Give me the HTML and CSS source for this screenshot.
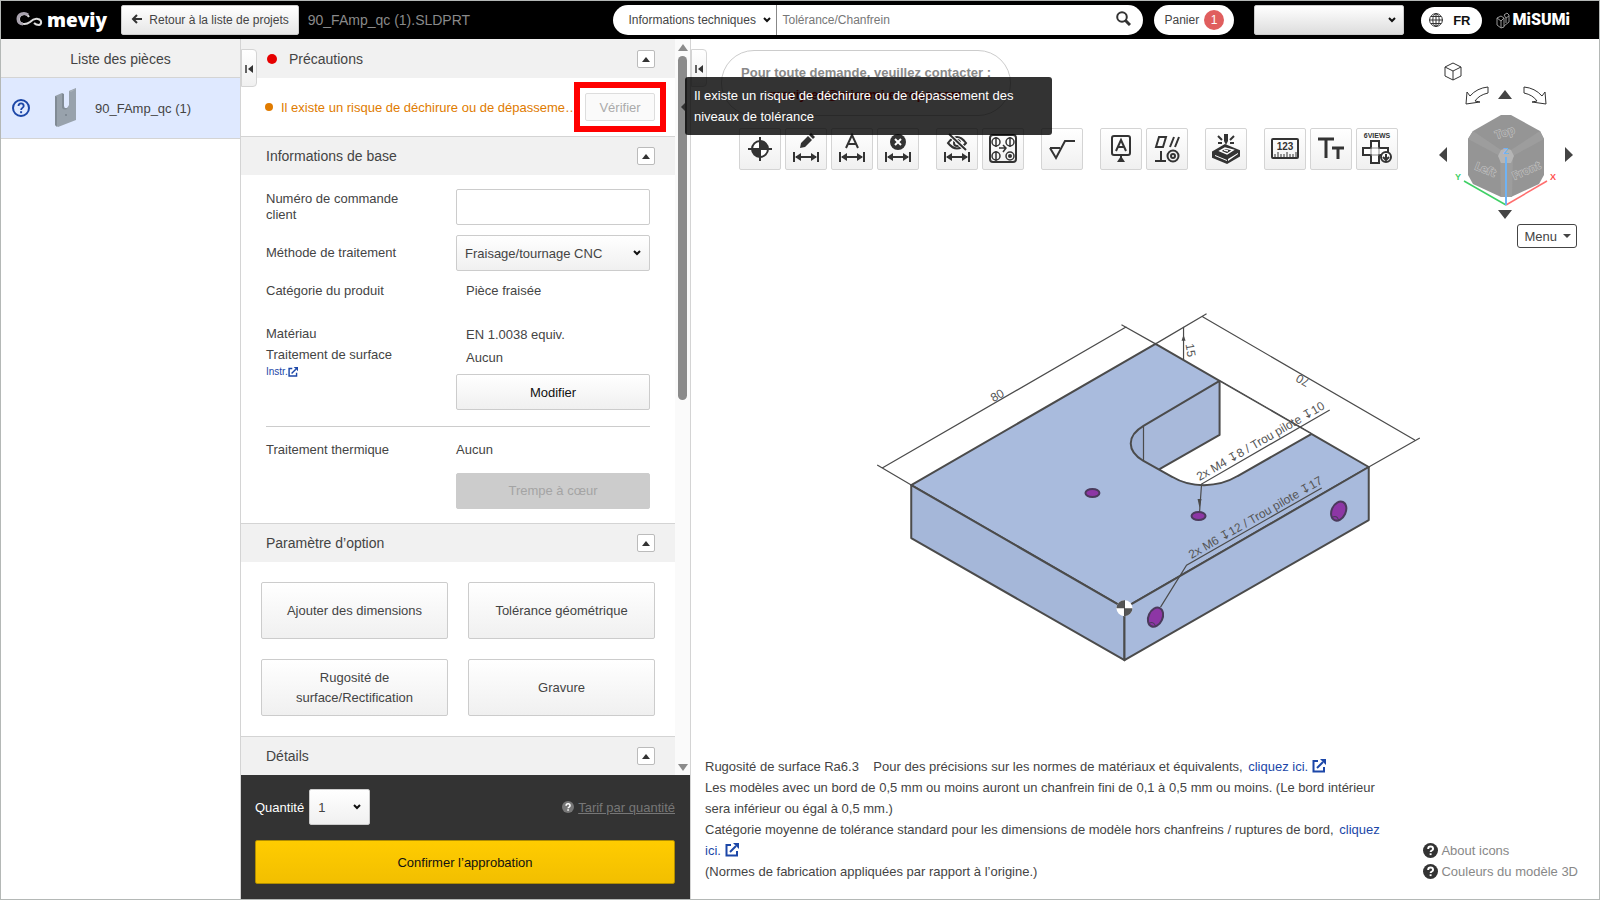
FILE: index.html
```
<!DOCTYPE html>
<html lang="fr">
<head>
    <meta charset="UTF-8">
    <meta name="viewport" content="width=device-width, initial-scale=1.0">
    <title>meviy - 90_FAmp_qc (1).SLDPRT</title>
    <link rel="stylesheet" href="styles.css">
</head>
<body>
    <!-- Shared symbols -->
    <svg class="defs" width="0" height="0" aria-hidden="true">
        <symbol id="dim" viewBox="0 0 26 10">
            <path d="M1 0v10M25 0v10M3 5h20" fill="none" stroke="#333" stroke-width="2"/>
            <path d="M2 5l6-4v8zM24 5l-6-4v8z" fill="#333"/>
        </symbol>
        <symbol id="external" viewBox="0 0 14 14">
            <path d="M6 2H1.5v10.500H12V8" fill="none" stroke="currentColor" stroke-width="2"/>
            <path d="M5 9l6-6" stroke="currentColor" stroke-width="2"/>
            <path d="M8 0h6v6z" fill="currentColor"/>
        </symbol>
        <symbol id="help" viewBox="0 0 14 14">
            <circle cx="7" cy="7" r="7" fill="currentColor"/>
            <path d="M4.800 5.500c0-3 4.600-3 4.600 0 0 1.600-2.300 1.500-2.300 3" fill="none" class="help-mark" stroke-width="1.800"/>
            <path d="M6.200 9.600h1.800v1.700H6.200z" class="help-dot"/>
        </symbol>
    </svg>

    <div class="app">
        <!-- Header -->
        <header class="header">
            <a href="#" class="logo">
                <svg width="28" height="16" viewBox="0 0 28 16" aria-hidden="true">
                    <path d="M13 5C10 0 3 2 3 7c0 6 7 6 11 3 3-3 5-4 8-3 4 1 4 5 1 6-3 0-4-1-5-2" fill="none" stroke="#ddd" stroke-width="2"/>
                    <path d="M12 3C8 0 2 2 2 7c0 3 2 5 5 5" fill="none" stroke="#a8a2ae" stroke-width="3"/>
                </svg>
                <span>meviy</span>
            </a>
            <button class="back-btn">
                <svg width="11" height="10" viewBox="0 0 11 10"><path d="M6 1L2 5l4 4M2 5h9" fill="none" stroke="#333" stroke-width="2"/></svg>
                Retour à la liste de projets
            </button>
            <span class="file-name">90_FAmp_qc (1).SLDPRT</span>

            <form class="search">
                <select class="search-type" aria-label="Type de recherche">
                    <option>Informations techniques</option>
                </select>
                <input type="text" class="search-input" placeholder="Tolérance/Chanfrein" aria-label="Recherche">
                <button type="button" class="search-btn" aria-label="Rechercher">
                    <svg width="15" height="15" viewBox="0 0 15 15"><circle cx="6" cy="6" r="4.800" fill="none" stroke="#333" stroke-width="2"/><path d="M9 9l5 5" stroke="#333" stroke-width="3"/></svg>
                </button>
            </form>
            <button class="cart">Panier <span class="badge">1</span></button>
            <select class="account" aria-label="Compte"><option></option></select>
            <button class="lang">
                <svg width="14" height="14" viewBox="0 0 14 14"><g fill="none" stroke="#333"><circle cx="7" cy="7" r="6.400"/><ellipse cx="7" cy="7" rx="3.200" ry="6.400"/><path d="M7 0v14M0 7h14M2 3.500h10M2 10.500h10"/></g></svg>
                FR
            </button>
            <a href="#" class="misumi">
                <svg width="14" height="17" viewBox="0 0 14 17" aria-hidden="true"><path d="M1 6l4-2 3 2v9l-3 1-4-3zM1 6l4 3v7M5 9l3-3M8 3l3-2 2 2v7l-5 4M8 3l2 3 3-2M10 6v5" fill="none" stroke="#999"/></svg>
                <span>MiSUMi</span>
            </a>
        </header>

        <main class="main">
            <!-- Part list -->
            <aside class="parts">
                <h2 class="parts-title">Liste des pièces</h2>
                <a href="#" class="part">
                    <svg width="18" height="18" viewBox="0 0 18 18"><circle cx="9" cy="9" r="8" fill="none" stroke="#1c47a8" stroke-width="2"/><path d="M6.500 7c0-3.600 5.200-3.600 5.200 0 0 2-2.600 1.800-2.600 4" fill="none" stroke="#1c47a8" stroke-width="1.800"/><path d="M8.100 12.200h2v2h-2z" fill="#1c47a8"/></svg>
                    <svg class="thumb" width="24" height="40" viewBox="0 0 24 40"><path d="M1 8l7-3v14q4 4 7-2V3l7-3v32L4 39l-3-2z" fill="#98a2ac"/><path d="M1 8l2 1v30l-2-2zM8 5v15q3 3 6 0-4 1-4-2V6z" fill="#818b95"/><path d="M15 3l2 1 5-3" fill="#aab2ba"/><circle cx="12" cy="27" r="1" fill="#77818b"/></svg>
                    <span>90_FAmp_qc (1)</span>
                </a>
            </aside>

            <!-- Settings -->
            <section class="settings">
                <button class="collapse" aria-label="Réduire"><svg width="8" height="8" viewBox="0 0 8 8"><path d="M1 0v8" stroke="#333" stroke-width="1.500"/><path d="M8 0v8L3 4z" fill="#333"/></svg></button>
                <div class="scroll">
                    <div class="scroll-content">
                        <div class="section-head">
                            <h3><span class="dot red"></span>Précautions</h3>
                            <button class="toggle" aria-label="Replier Précautions"></button>
                        </div>
                        <div class="warning">
                            <span class="dot orange"></span>
                            <p>Il existe un risque de déchirure ou de dépasseme…</p>
                            <div class="highlight"><button class="verify" disabled>Vérifier</button></div>
                        </div>

                        <div class="section-head">
                            <h3>Informations de base</h3>
                            <button class="toggle" aria-label="Replier Informations de base"></button>
                        </div>
                        <div class="info">
                            <div class="field">
                                <label for="order">Numéro de commande client</label>
                                <input type="text" id="order" class="control">
                            </div>
                            <div class="field">
                                <label for="method">Méthode de traitement</label>
                                <select id="method" class="control"><option>Fraisage/tournage CNC</option></select>
                            </div>
                            <div class="field category">
                                <span>Catégorie du produit</span>
                                <span class="value">Pièce fraisée</span>
                            </div>
                            <div class="field material">
                                <div>
                                    <p>Matériau</p>
                                    <p>Traitement de surface</p>
                                    <a href="#" class="instr">Instr.<svg width="10" height="10"><use href="#external"/></svg></a>
                                </div>
                                <div>
                                    <p class="value">EN 1.0038 equiv.</p>
                                    <p class="value">Aucun</p>
                                    <button class="control">Modifier</button>
                                </div>
                            </div>
                            <div class="field heat">
                                <p>Traitement thermique</p>
                                <div>
                                    <p>Aucun</p>
                                    <button class="control" disabled>Trempe à cœur</button>
                                </div>
                            </div>
                        </div>

                        <div class="section-head">
                            <h3>Paramètre d’option</h3>
                            <button class="toggle" aria-label="Replier Paramètre d’option"></button>
                        </div>
                        <div class="options">
                            <button class="option">Ajouter des dimensions</button>
                            <button class="option">Tolérance géométrique</button>
                            <button class="option">Rugosité de surface/Rectification</button>
                            <button class="option">Gravure</button>
                        </div>

                        <div class="section-head">
                            <h3>Détails</h3>
                            <button class="toggle" aria-label="Replier Détails"></button>
                        </div>
                    </div>
                    <div class="scrollbar">
                        <span class="arrow-up"></span>
                        <span class="thumb-track"><span class="thumb-bar"></span></span>
                        <span class="arrow-down"></span>
                    </div>
                </div>

                <div class="order">
                    <div class="order-row">
                        <label for="qty">Quantité</label>
                        <select id="qty" class="control qty"><option>1</option></select>
                        <a href="#" class="price-link"><svg width="12" height="12"><use href="#help"/></svg><span>Tarif par quantité</span></a>
                    </div>
                    <button class="confirm">Confirmer l’approbation</button>
                </div>
            </section>

            <!-- 3D viewer -->
            <section class="viewer">
                <button class="collapse" aria-label="Réduire"><svg width="8" height="8" viewBox="0 0 8 8"><path d="M1 0v8" stroke="#333" stroke-width="1.500"/><path d="M8 0v8L3 4z" fill="#333"/></svg></button>
                <div class="contact">
                    <p>Pour toute demande, veuillez contacter :</p>
                    <a href="#">meviy-eu@misumi-europe.com</a>
                </div>

                <div class="toolbar">
                    <div class="group">
                        <button class="tool" aria-label="Origine"><svg width="32" height="32" viewBox="0 0 32 32"><circle cx="16" cy="16" r="8" fill="#fff" stroke="#333" stroke-width="2"/><path d="M16 16V8a8 8 0 0 1 8 8zM16 16v8a8 8 0 0 1-8-8z" fill="#333"/><path d="M16 4v24M4 16h24" stroke="#333" stroke-width="2"/></svg></button>
                        <button class="tool" aria-label="Modifier une dimension"><svg width="32" height="32" viewBox="0 0 32 32"><path d="M10 15l1-5 7-7 4 4-7 7zM19 2l2-2 4 4-2 2z" fill="#333"/><use href="#dim" x="3" y="19" width="26" height="10"/></svg></button>
                        <button class="tool" aria-label="Texte de dimension"><svg width="32" height="32" viewBox="0 0 32 32"><path d="M10 15l6-13 6 13M12 11h8" fill="none" stroke="#333" stroke-width="2"/><use href="#dim" x="3" y="19" width="26" height="10"/></svg></button>
                        <button class="tool" aria-label="Supprimer une dimension"><svg width="32" height="32" viewBox="0 0 32 32"><circle cx="16" cy="9" r="8" fill="#333"/><path d="M13 6l6 6M19 6l-6 6" stroke="#fff" stroke-width="2"/><use href="#dim" x="3" y="19" width="26" height="10"/></svg></button>
                    </div>
                    <div class="group">
                        <button class="tool" aria-label="Masquer les dimensions"><svg width="32" height="32" viewBox="0 0 32 32"><path d="M7 10q9-12 18 0-9 11-18 0z" fill="none" stroke="#333" stroke-width="2"/><circle cx="16" cy="10" r="3" fill="none" stroke="#333" stroke-width="2"/><path d="M8 1l17 16" stroke="#fff" stroke-width="4"/><path d="M8 1l17 16" stroke="#333" stroke-width="2"/><use href="#dim" x="3" y="19" width="26" height="10"/></svg></button>
                        <button class="tool" aria-label="Grouper les trous"><svg width="32" height="32" viewBox="0 0 32 32"><g fill="none" stroke="#333" stroke-width="2"><rect x="3" y="2" width="26" height="27" rx="3"/><g stroke-width="1.500"><circle cx="9" cy="9" r="4"/><circle cx="23" cy="9" r="4"/><circle cx="9" cy="23" r="4"/><circle cx="23" cy="23" r="4"/><path d="M9 4v10M23 4v10M9 18v10M12 15h7M16 12l3 3-3 4"/></g></g><circle cx="23" cy="23" r="2" fill="#333"/></svg></button>
                    </div>
                    <div class="group">
                        <button class="tool" aria-label="Rugosité"><svg width="32" height="32" viewBox="0 0 32 32"><path d="M4 15h10M4 15l6 10 9-17h10" fill="none" stroke="#333" stroke-width="2"/></svg></button>
                    </div>
                    <div class="group">
                        <button class="tool" aria-label="Référence"><svg width="32" height="32" viewBox="0 0 32 32"><rect x="7" y="3" width="18" height="19" rx="2" fill="none" stroke="#333" stroke-width="2"/><path d="M11 18l5-11 5 11M13 14h6M16 22v5" fill="none" stroke="#333" stroke-width="2"/><path d="M16 23l4 6h-8z" fill="#333"/></svg></button>
                        <button class="tool" aria-label="Tolérance géométrique"><svg width="32" height="32" viewBox="0 0 32 32"><g fill="none" stroke="#333" stroke-width="2"><path d="M8 4h7l-3 10H5zM23 4l-4 10M28 4l-4 10M10 18v10M4 28h11"/><circle cx="22" cy="23" r="5.500"/><circle cx="22" cy="23" r="2"/></g></svg></button>
                    </div>
                    <div class="group">
                        <button class="tool" aria-label="Gravure"><svg width="32" height="32" viewBox="0 0 32 32"><path d="M3 19l12-7 14 6v5l-12 7L3 24z" fill="#333" stroke="#333" stroke-width="2"/><path d="M5 22l12 5v1L5 23zM18 26l10-6v1l-10 7z" fill="#fff"/><path d="M10 18l5-3 8 2-6 4zM14 17l4 1" fill="none" stroke="#fff" stroke-width="1.500"/><path d="M14 1h4v7l-2 4-2-4z" fill="#333"/><path d="M8 3l4 4M24 3l-4 4M8 10h4M24 10h-4" stroke="#333" stroke-width="2"/></svg></button>
                    </div>
                    <div class="group">
                        <button class="tool" aria-label="Mesurer"><svg width="32" height="32" viewBox="0 0 32 32"><rect x="3" y="6" width="26" height="19" rx="1" fill="none" stroke="#333" stroke-width="2"/><text x="16" y="17" class="ruler">123</text><path d="M6 25v-4M9 25v-6M12 25v-4M15 25v-4M18 25v-6M21 25v-4M24 25v-4M27 25v-6" stroke="#333"/></svg></button>
                        <button class="tool" aria-label="Taille du texte"><svg width="32" height="32" viewBox="0 0 32 32"><path d="M3 6h16M11 6v19M17 15h12M23 15v11" fill="none" stroke="#333" stroke-width="3"/></svg></button>
                        <button class="tool" aria-label="6 vues"><svg width="32" height="32" viewBox="0 0 32 32"><text x="16" y="5" class="views">6VIEWS</text><path d="M10 8h8v7h9v7h-9v8h-8v-8H2v-7h8z" fill="#fff" stroke="#333" stroke-width="2"/><path d="M10 15h8v7h-8z" fill="none" stroke="#888"/><circle cx="25" cy="24" r="5" fill="#fff" stroke="#333" stroke-width="2"/><path d="M25 21v5M22 24l3 3 3-3" fill="none" stroke="#333" stroke-width="2"/></svg></button>
                    </div>
                </div>

                <!-- Model: block with slot, holes and dimensions -->
                <svg class="model" viewBox="691 174 907 580" role="img" aria-label="Modèle 3D">
                    <g stroke="#4b4b4b" stroke-width="2" stroke-linejoin="round">
                        <path d="M911 486L1155 345L1368 468L1124 609z" fill="#a9bbdd"/>
                        <path d="M911 486v53L1124 661v-52z" fill="#a5b7d9"/>
                        <path d="M1124 609v52L1368 521v-53z" fill="#a8badc"/>
                        <path d="M1219 382L1311 435L1237 477C1213 491 1182 487 1159 470L1219 436z" fill="#fff" stroke="none"/>
                        <path d="M1219 382v54L1159 470L1143 462V427z" fill="#a8b9da" stroke="none"/>
                        <path d="M1143 427C1126 437 1126 452 1143 462z" fill="#a0b2d5" stroke="none"/>
                        <path d="M1219 382v54L1159 470M1219 382L1143 427C1126 437 1126 452 1143 462L1172 478C1190 489 1217 489 1237 477L1311 435" fill="none"/>
                    </g>
                    <g fill="none" stroke="#4b4b4b" stroke-width="1.200">
                        <path d="M1143 427v35M1219 382L1311 435"/>
                        <path d="M882 469L1126 328M877 466L911 486M1121 326L1155 345"/>
                        <path d="M1202 318L1414 441M1155 345L1206 315M1368 468L1419 439"/>
                        <path d="M1183 328v33"/>
                        <path d="M1199 513L1201 485L1329 411M1160 608L1186 566L1321 489"/>
                    </g>
                    <path d="M1197 500h4l-2 9zM1181 342h4l-2-6z" fill="#4b4b4b"/>
                    <g fill="#8d36a5" stroke="#4b3a5c" stroke-width="2">
                        <ellipse cx="1092" cy="494" rx="7" ry="4"/>
                        <ellipse cx="1198" cy="517" rx="7" ry="4"/>
                        <ellipse cx="1155" cy="618" rx="7" ry="10" transform="rotate(25 1155 618)"/>
                        <ellipse cx="1338" cy="512" rx="7" ry="10" transform="rotate(25 1338 512)"/>
                    </g>
                    <path d="M1149 624q4-2 6 3M1332 518q4-2 6 3" fill="none" stroke="#4b3a5c"/>
                    <circle cx="1124" cy="609" r="8" fill="#fff"/>
                    <path d="M1124 609h-8a8 8 0 0 1 8-8zM1124 609h8a8 8 0 0 1-8 8z" fill="#555"/>
                    <path d="M1124 601v16" stroke="#4b4b4b"/>
                    <g class="dim-text">
                        <text text-anchor="middle" transform="translate(999 400) rotate(-30)">80</text>
                        <text text-anchor="middle" transform="translate(1304 378) rotate(210)">70</text>
                        <text text-anchor="middle" transform="translate(1186 352) rotate(80)">15</text>
                        <text transform="translate(1199 482) rotate(-30)">2x M4 ↧8 / Trou pilote ↧10</text>
                        <text transform="translate(1191 560) rotate(-30)">2x M6 ↧12 / Trou pilote ↧17</text>
                    </g>
                </svg>

                <div class="viewer-foot">
                    <div class="notes">
                        <p>Rugosité de surface Ra6.3 &nbsp;&nbsp; Pour des précisions sur les normes de matériaux et équivalents, <a href="#">cliquez ici. <svg width="14" height="14"><use href="#external"/></svg></a></p>
                        <p>Les modèles avec un bord de 0,5 mm ou moins auront un chanfrein fini de 0,1 à 0,5 mm ou moins. (Le bord intérieur sera inférieur ou égal à 0,5 mm.)</p>
                        <p>Catégorie moyenne de tolérance standard pour les dimensions de modèle hors chanfreins / ruptures de bord, <a href="#">cliquez ici. <svg width="14" height="14"><use href="#external"/></svg></a></p>
                        <p>(Normes de fabrication appliquées par rapport à l’origine.)</p>
                    </div>
                    <div class="legend">
                        <a href="#"><svg width="15" height="15"><use href="#help"/></svg>About icons</a>
                        <a href="#"><svg width="15" height="15"><use href="#help"/></svg>Couleurs du modèle 3D</a>
                    </div>
                </div>

                <!-- View cube -->
                <div class="nav-cube">
                    <svg width="140" height="162" viewBox="1438 60 140 162" aria-hidden="true">
                        <path d="M1446 67l8-4 8 4v9l-8 4-8-4zM1446 67l8 4 8-4M1454 71v9" fill="#fff" stroke="#333"/>
                        <path d="M1489 87v6q-9 2-13 8l5 1-14 2 1-12 3 4q7-8 18-9zM1525 87v6q9 2 13 8l-5 1 14 2-1-12-3 4q-7-8-18-9z" fill="#fff" stroke="#333"/>
                        <path d="M1499 99h14l-7-9zM1499 210h14l-7 9zM1448 147v15l-8-7zM1566 147v15l8-7z" fill="#444"/>
                        <path d="M1502 115h10l29 16 4 8v36l-5 9-28 13h-10l-28-13-5-9v-36l5-8z" fill="#959595"/>
                        <path d="M1474 131l28 19h10l29-19 4 8-31 17-1 41h-11l-1-41-32-17z" fill="#9d9d9d"/>
                        <path d="M1502 150l5-2 5 2 3 6-3 7h-10l-3-7z" fill="#b5b5b5"/>
                        <path d="M1465 181l42 24" stroke="#3fd065" stroke-width="1.500"/>
                        <path d="M1507 205l41-24" stroke="#ff6e6e" stroke-width="1.500"/>
                        <path d="M1507 205v-48" stroke="#6fb3f5" stroke-width="2"/>
                        <g class="cube-text">
                            <text transform="translate(1507 136) rotate(-18)">Top</text>
                            <text transform="translate(1485 173) rotate(22)">Left</text>
                            <text transform="translate(1529 174) rotate(-24)">Front</text>
                        </g>
                        <g class="axis-text">
                            <text x="1459" y="180" fill="#3fd065">Y</text>
                            <text x="1554" y="180" fill="#ff5050">X</text>
                            <text x="1507" y="154" fill="#6fb3f5">Z</text>
                        </g>
                    </svg>
                    <button class="menu">Menu <span class="caret"></span></button>
                </div>

                <div class="tooltip" role="tooltip">Il existe un risque de déchirure ou de dépassement des niveaux de tolérance</div>
            </section>
        </main>
    </div>
</body>
</html>
```
FILE: styles.css
```
:root {
    --text: #444;
    --line: #d4d4d4;
    --head: #f1f1f1;
    --link: #1c47a8;
    --btn: linear-gradient(#fff, #f0f0f0);
    --chevron: url("data:image/svg+xml,%3Csvg xmlns='http://www.w3.org/2000/svg' width='8' height='6'%3E%3Cpath d='M1 1l3 3 3-3' fill='none' stroke='%23111' stroke-width='2'/%3E%3C/svg%3E");
}

* {
    margin: 0;
    padding: 0;
    box-sizing: border-box;
}

body {
    font-family: "Liberation Sans", Arial, sans-serif;
    font-size: 13px;
    color: var(--text);
    background: #fff;
}

button, input, select {
    font: inherit;
    color: inherit;
}

a {
    color: var(--link);
    text-decoration: none;
}

select {
    appearance: none;
    background: var(--chevron) no-repeat right 8px center, var(--btn);
}

.defs {
    position: absolute;
}

.app {
    display: flex;
    flex-direction: column;
    height: 100vh;
    border: 1px solid #b4b8b6;
}

/* Header */
.header {
    display: flex;
    align-items: center;
    height: 38px;
    flex: none;
    padding: 0 29px 0 15px;
    background: #000;
}

.logo {
    display: flex;
    align-items: center;
    gap: 3px;
    width: 105px;
    color: #fff;
    font: 800 19px/24px "Open Sans", sans-serif;
}

.back-btn {
    height: 30px;
    padding: 0 9px;
    border: 1px solid #ccc;
    border-radius: 2px;
    background: linear-gradient(#fff, #e6e6e6);
    font-size: 12px;
}

.back-btn svg {
    margin-right: 4px;
}

.file-name {
    margin-left: 9px;
    font-size: 14px;
    color: #8a8a8a;
}

.search {
    display: flex;
    align-items: center;
    width: 530px;
    height: 30px;
    margin-left: auto;
    border-radius: 15px;
    background: #fff;
    font-size: 12px;
    overflow: hidden;
}

.search-type {
    width: 164px;
    height: 30px;
    padding-left: 15px;
    border: 0;
    border-right: 1px solid #888;
    background: var(--chevron) no-repeat right 5px center;
}

.search-input {
    flex: 1;
    padding-left: 5px;
    border: 0;
    outline: 0;
}

.search-input::placeholder {
    color: #777;
}

.search-btn {
    width: 40px;
    height: 30px;
    border: 0;
    background: none;
}

.cart {
    display: flex;
    align-items: center;
    gap: 5px;
    height: 30px;
    margin-left: 11px;
    padding: 0 10px;
    border: 0;
    border-radius: 15px;
    background: #fff;
    font-size: 12px;
}

.badge {
    width: 20px;
    border-radius: 10px;
    background: #e05e5e;
    color: #fff;
    line-height: 20px;
}

.account {
    width: 150px;
    height: 30px;
    margin: 0 17px 0 20px;
    border: 1px solid #ccc;
    border-radius: 2px;
    background: var(--chevron) no-repeat right 7px center, linear-gradient(#fff, #ddd);
}

.lang {
    display: flex;
    align-items: center;
    gap: 10px;
    height: 27px;
    padding: 0 11px 0 8px;
    border: 0;
    border-radius: 14px;
    background: #fff;
    color: #111;
    font-weight: bold;
}

.misumi {
    display: flex;
    align-items: center;
    gap: 3px;
    margin-left: 14px;
    color: #fff;
    font: 900 16px/24px Roboto, sans-serif;
}

/* Layout */
.main {
    display: grid;
    grid-template-columns: 240px 450px 1fr;
    flex: 1;
    min-height: 0;
}

.parts {
    border-right: 1px solid var(--line);
}

.parts-title {
    height: 38px;
    background: var(--head);
    font-size: 14px;
    font-weight: normal;
    line-height: 40px;
    text-align: center;
}

.part {
    display: flex;
    align-items: center;
    height: 62px;
    padding-left: 11px;
    border: 1px solid var(--line);
    border-left: 0;
    border-right: 0;
    background: #dfe9ff;
    color: var(--text);
}

.part .thumb {
    margin: 0 17px 0 24px;
}

.collapse {
    position: absolute;
    top: 10px;
    left: 0;
    z-index: 2;
    width: 16px;
    height: 38px;
    border: 1px solid var(--line);
    border-radius: 0 4px 4px 0;
    background: var(--btn);
}

/* Settings panel */
.settings {
    position: relative;
    display: flex;
    flex-direction: column;
    min-height: 0;
    border-right: 1px solid var(--line);
}

.scroll {
    display: flex;
    flex: 1;
    min-height: 0;
    overflow: hidden;
}

.scroll-content {
    flex: 1;
    min-width: 0;
}

.scrollbar {
    display: flex;
    flex-direction: column;
    align-items: center;
    gap: 5px;
    width: 15px;
    padding: 5px 0 4px;
    background: #fafafa;
}

.arrow-up, .arrow-down {
    border: 5px solid transparent;
    border-top: 0;
    border-bottom: 7px solid #8b8b8b;
}

.arrow-down {
    border-top: 7px solid #8b8b8b;
    border-bottom: 0;
}

.thumb-track {
    flex: 1;
}

.thumb-bar {
    display: block;
    width: 9px;
    height: 49%;
    border-radius: 5px;
    background: #8b8b8b;
}

.section-head {
    display: flex;
    align-items: center;
    justify-content: space-between;
    height: 39px;
    padding: 0 20px 0 25px;
    border-top: 1px solid var(--line);
    background: var(--head);
}

.section-head:first-child {
    border-top-color: var(--head);
}

.section-head h3 {
    font-size: 14px;
    font-weight: normal;
}

.toggle {
    display: flex;
    align-items: center;
    justify-content: center;
    width: 18px;
    height: 18px;
    border: 1px solid #bbb;
    border-radius: 2px;
    background: #fff;
}

.toggle::before {
    content: "";
    border: 4px solid transparent;
    border-top: 0;
    border-bottom: 5px solid #333;
}

.dot {
    display: inline-block;
    flex: none;
    border-radius: 50%;
}

.dot.red {
    width: 10px;
    height: 10px;
    margin: 0 12px 0 1px;
    background: #e60000;
}

.dot.orange {
    width: 8px;
    height: 8px;
    background: #e07b00;
}

.warning {
    display: flex;
    align-items: center;
    height: 58px;
    padding: 0 9px 0 24px;
    color: #e07b00;
}

.warning p {
    flex: 1;
    margin-left: 8px;
    overflow: hidden;
    white-space: nowrap;
}

.highlight {
    padding: 5px;
    border: 6px solid #f00;
}

.verify {
    display: block;
    width: 70px;
    height: 28px;
    border: 1px solid #ddd;
    border-radius: 2px;
    background: #fafafa;
    color: #aaa;
}

.info {
    padding: 14px 25px 14px 25px;
}

.field {
    display: grid;
    grid-template-columns: 1fr 194px;
    align-items: center;
    margin-bottom: 10px;
}

.field label {
    max-width: 150px;
    line-height: 16px;
}

.value {
    padding-left: 10px;
}

.control {
    width: 100%;
    height: 36px;
    border: 1px solid #ccc;
    border-radius: 2px;
}

select.control {
    padding-left: 8px;
}

button.control {
    background: var(--btn);
    color: #111;
}

button.control:disabled {
    background: #ccc;
    color: #a4a4a4;
}

.category {
    height: 18px;
    margin-bottom: 24px;
}

.material {
    align-items: start;
    margin: 0;
    padding-bottom: 16px;
    border-bottom: 1px solid #ccc;
    line-height: 21px;
}

.material .value {
    line-height: 23px;
}

.material .control {
    display: block;
    margin-top: 5px;
}

.instr {
    display: flex;
    align-items: center;
    font-size: 10px;
    line-height: 13px;
}

.heat {
    align-items: start;
    margin: 0;
    padding-top: 14px;
    line-height: 18px;
}

.heat .control {
    display: block;
    margin-top: 14px;
}

.options {
    display: grid;
    grid-template-columns: 1fr 1fr;
    gap: 20px;
    padding: 20px;
}

.option {
    height: 57px;
    padding: 0 20px;
    border: 1px solid #ccc;
    border-radius: 2px;
    background: var(--btn);
    line-height: 20px;
}

/* Order footer */
.order {
    height: 124px;
    padding: 14px 15px 14px 14px;
    background: #333;
    color: #fff;
}

.order-row {
    display: flex;
    align-items: center;
    gap: 5px;
    margin-bottom: 15px;
}

.qty {
    width: 61px;
    color: var(--text);
}

.price-link {
    display: flex;
    align-items: center;
    gap: 4px;
    margin-left: auto;
    color: #777;
}

.price-link span {
    text-decoration: underline;
}

.help-mark {
    stroke: #fff;
}

.help-dot {
    fill: #fff;
}

.price-link .help-mark {
    stroke: #333;
}

.confirm {
    width: 100%;
    height: 44px;
    border: 1px solid #b08d00;
    border-radius: 2px;
    background: linear-gradient(#fc0, #f2bf00);
    color: #111;
}

/* Viewer */
.viewer {
    position: relative;
    display: flex;
    flex-direction: column;
    min-width: 0;
    min-height: 0;
}

.contact {
    align-self: flex-start;
    width: 290px;
    height: 66px;
    margin: 11px 0 0 30px;
    padding-top: 11px;
    border: 1px solid #ccc;
    border-radius: 33px;
    color: #888;
    font-weight: bold;
    line-height: 22px;
    text-align: center;
}

.contact a {
    color: #e00000;
}

.toolbar {
    display: flex;
    gap: 17px;
    margin: 12px 0 0 48px;
}

.group {
    display: flex;
    gap: 4px;
}

.tool {
    display: flex;
    align-items: center;
    justify-content: center;
    width: 42px;
    height: 42px;
    border: 1px solid var(--line);
    border-radius: 2px;
    background: var(--btn);
}

.ruler {
    font: bold 10px "Liberation Sans", sans-serif;
    text-anchor: middle;
    fill: #333;
}

.views {
    font: bold 7px "Liberation Sans", sans-serif;
    text-anchor: middle;
    fill: #333;
}

.model {
    flex: 1;
    width: 100%;
    min-height: 0;
}

.dim-text {
    font: 12px "Liberation Sans", "DejaVu Sans", sans-serif;
    fill: #555;
}

.viewer-foot {
    display: flex;
    align-items: flex-end;
    justify-content: space-between;
    padding: 0 21px 17px 14px;
}

.notes {
    max-width: 685px;
    line-height: 21px;
}

.notes a {
    margin-left: 2px;
}

.notes svg {
    vertical-align: -2px;
}

.legend a {
    display: flex;
    align-items: center;
    gap: 3px;
    color: #888;
    line-height: 21px;
}

.legend svg {
    color: #333;
}

.nav-cube {
    position: absolute;
    top: 21px;
    right: 22px;
    display: flex;
    flex-direction: column;
    align-items: flex-end;
    gap: 2px;
}

.cube-text {
    font: bold 11px "Open Sans", sans-serif;
    text-anchor: middle;
    fill: #999;
    stroke: #c4c4c4;
    stroke-width: 1px;
    paint-order: stroke;
}

.axis-text {
    font: bold 9px "Liberation Sans", sans-serif;
    text-anchor: middle;
}

.menu {
    display: flex;
    align-items: center;
    gap: 6px;
    height: 24px;
    padding: 0 5px 0 6px;
    border: 1px solid #444;
    border-radius: 3px;
    background: #fff;
}

.caret {
    border: 4px solid transparent;
    border-top: 4px solid #444;
    border-bottom: 0;
}

.tooltip {
    position: absolute;
    top: 38px;
    left: -6px;
    z-index: 5;
    width: 367px;
    padding: 8px 9px 8px;
    border-radius: 3px;
    background: rgba(0, 0, 0, 0.8);
    color: #fff;
    line-height: 21px;
}

.tooltip::before {
    content: "";
    position: absolute;
    top: 26px;
    left: -4px;
    border: 4px solid transparent;
    border-left: 0;
    border-right-color: #333;
}
```
